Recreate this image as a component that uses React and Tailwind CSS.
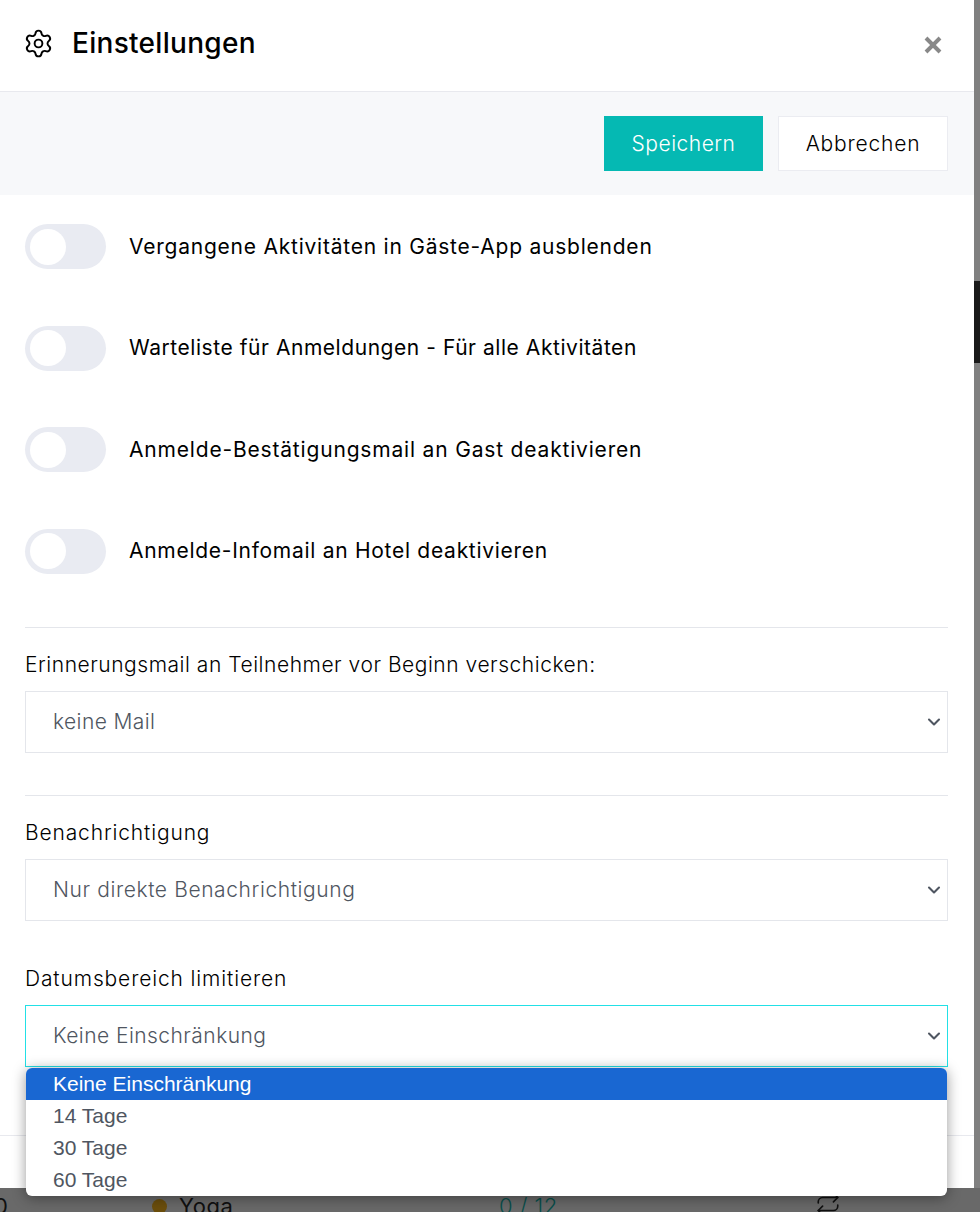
import React from 'react';
import { ChevronDown, Settings, X, Repeat } from 'lucide-react';

const toggles = [
  { label: 'Vergangene Aktivitäten in Gäste-App ausblenden', tracking: 'tracking-[0.77px]' },
  { label: 'Warteliste für Anmeldungen - Für alle Aktivitäten', tracking: 'tracking-[0.55px]' },
  { label: 'Anmelde-Bestätigungsmail an Gast deaktivieren', tracking: 'tracking-[0.82px]' },
  { label: 'Anmelde-Infomail an Hotel deaktivieren', tracking: 'tracking-[0.72px]' },
];

const options = ['Keine Einschränkung', '14 Tage', '30 Tage', '60 Tage'];

function Toggle({ label, tracking }) {
  return (
    <div className="flex h-[45px] items-center gap-[23px]">
      <div className="flex h-[45px] w-[81px] items-center rounded-full bg-[#e9ebf2] pl-[5px]">
        <div className="h-[36px] w-[36px] rounded-full bg-white" />
      </div>
      <span className={`text-[21px] leading-[30px] text-black ${tracking}`}>{label}</span>
    </div>
  );
}

function SelectBox({ value, tracking, focused }) {
  return (
    <div className={`flex h-[62px] items-center justify-between border bg-white pr-[3px] pl-[27px] ${focused ? 'border-[#22e0e6]' : 'border-[#e4e6eb]'}`}>
      <span className={`text-[21px] leading-[30px] font-light text-[#4f5661] ${tracking}`}>{value}</span>
      <ChevronDown size={20} strokeWidth={2.5} className="text-[#4f5661]" />
    </div>
  );
}

function FieldLabel({ tracking, children }) {
  return <label className={`mb-[11px] block text-[21px] leading-[30px] font-light text-black ${tracking}`}>{children}</label>;
}

export default function App() {
  return (
    <div className="relative h-[1212px] w-[980px] overflow-hidden bg-[#696969] font-['Inter','Liberation_Sans',sans-serif]">
      <div className="flex h-[1188px] w-[974px] flex-col bg-white">
        <header className="flex h-[92px] items-center justify-between border-b border-[#e8e9ee] pr-[27px] pl-[23px]">
          <div className="flex items-center gap-[18px]">
            <Settings size={31} strokeWidth={1.5} className="mt-[-4px] text-black" />
            <h1 className="mt-[-6px] text-[28px] font-medium tracking-[0.3px] text-black">Einstellungen</h1>
          </div>
          <X size={28} strokeWidth={3.4} strokeLinecap="butt" className="mt-[-2px] text-[#888888]" />
        </header>

        <div className="flex h-[103px] items-center justify-end gap-[15px] bg-[#f7f8fa] pr-[26px]">
          <button type="button" className="h-[55px] w-[159px] bg-[#05b9b3] text-[21px] font-light tracking-[0.5px] text-white">Speichern</button>
          <button type="button" className="h-[55px] w-[170px] border border-[#ebecf1] bg-white text-[21px] font-light tracking-[0.8px] text-black">Abbrechen</button>
        </div>

        <div className="flex flex-1 flex-col pt-[29px] pr-[26px] pl-[25px]">
          <div className="flex flex-col gap-[56.5px]">
            {toggles.map((t) => <Toggle key={t.label} label={t.label} tracking={t.tracking} />)}
          </div>

          <div className="mt-[53px] border-t border-[#e4e6eb] pt-[22px]">
            <FieldLabel tracking="tracking-[0.53px]">Erinnerungsmail an Teilnehmer vor Beginn verschicken:</FieldLabel>
            <SelectBox value="keine Mail" tracking="tracking-[0.4px]" />
          </div>

          <div className="mt-[42px] border-t border-[#e4e6eb] pt-[22px]">
            <FieldLabel tracking="tracking-[0.85px]">Benachrichtigung</FieldLabel>
            <SelectBox value="Nur direkte Benachrichtigung" tracking="tracking-[0.6px]" />
          </div>

          <div className="mt-[43px]">
            <FieldLabel tracking="tracking-[0.86px]">Datumsbereich limitieren</FieldLabel>
            <SelectBox value="Keine Einschränkung" tracking="tracking-[0.45px]" focused />
          </div>

          <div className="mt-[68px] -mr-[26px] -ml-[25px] border-t border-[#e8e9ee]" />
        </div>
      </div>

      {/* page behind the modal */}
      <div className="flex h-[36px] items-center text-[22px] tracking-[0.5px] text-[#101010]">
        <span className="ml-[-6px] w-[158px]">0</span>
        <span className="h-[15px] w-[15px] rounded-full bg-[#6b4e0c]" />
        <span className="ml-[12px] w-[320px]">Yoga</span>
        <span className="font-light text-[#084f4b]">0 / 12</span>
        <Repeat size={26} strokeWidth={1.5} className="mt-[-4px] ml-[257px]" />
      </div>

      {/* scrollbar */}
      <div className="absolute top-0 right-0 h-[1188px] w-[6px] bg-[#808080]">
        <div className="mt-[281px] h-[82px] bg-[#1a1a1a]" />
      </div>

      {/* open select list */}
      <ul className="absolute top-[1068px] left-[26px] w-[921px] overflow-hidden rounded-[6px] bg-white font-['Liberation_Sans',sans-serif] text-[21px] leading-[32px] text-[#4f5661] shadow-[0_2px_14px_rgba(0,0,0,0.4)]">
        {options.map((o, i) => (
          <li key={o} className={`h-[32px] pl-[27px] ${i === 0 ? 'bg-[#1967d2] text-white' : ''}`}>{o}</li>
        ))}
      </ul>
    </div>
  );
}
